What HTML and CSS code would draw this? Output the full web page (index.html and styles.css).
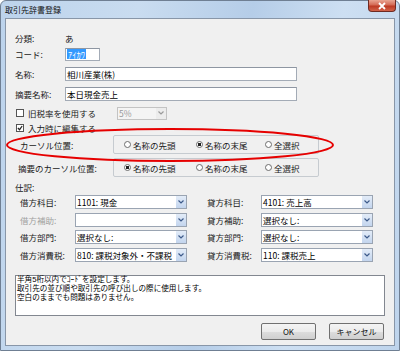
FILE: index.html
```html
<!doctype html>
<html>
    <head>
        <meta charset="utf-8" />
        <meta name="viewport" content="width=device-width, initial-scale=1" />
        <title>取引先辞書登録</title>
        <link rel="stylesheet" href="styles.css">
    </head>
    <body>
        <div class="window">
            <div class="titlebar">
                <span class="title">取引先辞書登録</span>
                <span class="close">
                    <svg width="10" height="8" viewBox="0 0 10 8">
                        <path d="M2 1 L8 7 M8 1 L2 7" stroke="#fff" stroke-width="1.8" />
                    </svg>
                </span>
            </div>
            <div class="client">
                <div class="row r1">
                    <span class="label">分類:</span>
                    <span>あ</span>
                </div>
                <div class="row r2">
                    <span class="label">コード:</span>
                    <span class="field code"><span class="sel">ｱｲｶﾜ</span></span>
                </div>
                <div class="row r3">
                    <span class="label">名称:</span>
                    <span class="field wide">相川産業(株)</span>
                </div>
                <div class="row r4">
                    <span class="label">摘要名称:</span>
                    <span class="field wide">本日現金売上</span>
                </div>
                <div class="row r5">
                    <span class="check"></span>
                    <span class="check-text">旧税率を使用する</span>
                    <span class="combo disabled small">
                        <span class="combo-text">5%</span>
                        <span class="arrow"><svg width="6" height="4" viewBox="0 0 6 4"><path d="M0.5 0.5 L3 3 L5.5 0.5" fill="none" stroke="#9a9a9a" stroke-width="1.2" /></svg></span>
                    </span>
                </div>
                <div class="row r6">
                    <span class="check checked">
                        <svg width="6" height="6" viewBox="0 0 7 7"><path d="M1 3.5 L3 5.5 L6 1.2" fill="none" stroke="#222" stroke-width="1.4" /></svg>
                    </span>
                    <span class="check-text">入力時に編集する</span>
                </div>
                <div class="row r7">
                    <span class="group-label">カーソル位置:</span>
                    <div class="group">
                        <span class="radio-item first"><span class="radio"></span>名称の先頭</span>
                        <span class="radio-item second"><span class="radio on"></span>名称の末尾</span>
                        <span class="radio-item"><span class="radio"></span>全選択</span>
                    </div>
                </div>
                <div class="row r8">
                    <span class="group-label alt">摘要のカーソル位置:</span>
                    <div class="group">
                        <span class="radio-item first"><span class="radio on"></span>名称の先頭</span>
                        <span class="radio-item second"><span class="radio"></span>名称の末尾</span>
                        <span class="radio-item"><span class="radio"></span>全選択</span>
                    </div>
                </div>
                <div class="row r9">
                    <span>仕訳:</span>
                </div>
                <div class="journal" id="journal"></div>
                <div class="memo">
                    <div>半角5桁以内でｺｰﾄﾞを設定します。</div>
                    <div>取引先の並び順や取引先の呼び出しの際に使用します。</div>
                    <div>空白のままでも問題はありません。</div>
                </div>
                <div class="buttons">
                    <span class="btn">OK</span>
                    <span class="btn">キャンセル</span>
                </div>
            </div>
            <svg class="mark" width="400" height="351" viewBox="0 0 400 351">
                <ellipse cx="170" cy="145" rx="163" ry="16" fill="none" stroke="#e60000" stroke-width="2" />
            </svg>
        </div>
        <script>
            const rows = [
                ["借方科目:", "1101: 現金", "貸方科目:", "4101: 売上高"],
                ["借方補助:", "", "貸方補助:", "選択なし:"],
                ["借方部門:", "選択なし:", "貸方部門:", "選択なし:"],
                ["借方消費税:", "810: 課税対象外・不課税", "貸方消費税:", "110: 課税売上"],
            ];
            const journal = document.getElementById("journal");
            const arrow = '<span class="arrow"><svg width="6" height="4" viewBox="0 0 6 4"><path d="M0.5 0.5 L3 3 L5.5 0.5" fill="none" stroke="#3d5a8a" stroke-width="1.2" /></svg></span>';

            rows.forEach((r, i) => {
                for (let c = 0; c < 2; c++) {
                    const label = document.createElement("span");
                    label.className = "j-label" + (c === 1 ? " right" : "") + (i === 1 && c === 0 ? " muted" : "");
                    label.textContent = r[c * 2];
                    const combo = document.createElement("span");
                    combo.className = "combo";
                    combo.innerHTML = '<span class="combo-text"></span>' + arrow;
                    combo.firstChild.textContent = r[c * 2 + 1];
                    journal.appendChild(label);
                    journal.appendChild(combo);
                }
            });
        </script>
    </body>
</html>
```

FILE: styles.css
```css
html {
    font-family: "Noto Sans CJK JP", "Noto Sans", sans-serif;
}

body {
    margin: 0;
    background: #fff;
}

.window {
    position: relative;
    width: 400px;
    height: 351px;
    box-sizing: border-box;
    border: 1px solid #6f7f93;
    border-radius: 6px 6px 0 0;
    background: linear-gradient(100deg, #bcd3ec 0%, #c9dcf0 30%, #b5cde8 55%, #cddff2 75%, #bed4ec 100%);
    display: flex;
    flex-direction: column;
}

.titlebar {
    height: 17px;
    display: flex;
    align-items: center;
    justify-content: space-between;
    padding-left: 4px;
}

.title {
    font-size: 8px;
    color: #111;
}

.close {
    align-self: flex-start;
    width: 28px;
    height: 12px;
    margin-right: 3px;
    margin-top: -1px;
    box-sizing: border-box;
    border: 1px solid #6e2a22;
    border-top: none;
    border-radius: 0 0 4px 4px;
    background: linear-gradient(#e9a592, #d46a55 45%, #bd3a24 55%, #d2634a);
    display: flex;
    align-items: center;
    justify-content: center;
}

.client {
    flex: 1;
    margin: 0 4px 4px 4px;
    border: 1px solid #8896a8;
    background: #f0f0f0;
    display: flex;
    flex-direction: column;
    padding-left: 9px;
    font-size: 8.5px;
    color: #1a1a1a;
}

.row {
    display: flex;
    align-items: center;
    height: 14px;
    flex-shrink: 0;
}

.r1 { margin-top: 12px; }
.r2 { margin-top: 2px; }
.r3 { margin-top: 6px; }
.r4 { margin-top: 6px; }
.r5 { margin-top: 5px; }
.r6 { margin-top: 1px; }
.r7 { height: 19px; }
.r8 { height: 19px; margin-top: 4px; }
.r9 { margin-top: 3px; }

.label {
    width: 50px;
}

.field {
    box-sizing: border-box;
    height: 14px;
    border: 1px solid #a3abb6;
    border-top-color: #8e96a2;
    background: #fff;
    display: flex;
    align-items: center;
    padding-left: 1px;
    color: #000;
}

.field.code {
    width: 35px;
    height: 13px;
}

.field.wide {
    width: 232px;
}

.sel {
    background: #3399ff;
    color: #fff;
    padding: 0 1px;
    line-height: 10px;
}

.check {
    box-sizing: border-box;
    width: 8px;
    height: 8px;
    margin-left: 1px;
    border: 1px solid #555;
    background: #fff;
    display: flex;
    align-items: center;
    justify-content: center;
}

.check-text {
    margin-left: 4px;
    width: 89px;
}

.combo {
    box-sizing: border-box;
    width: 112px;
    height: 14px;
    border: 1px solid #9aa4b2;
    background: #fff;
    display: flex;
    align-items: center;
    color: #000;
}

.combo-text {
    flex: 1;
    padding-left: 1px;
    white-space: nowrap;
    overflow: hidden;
}

.arrow {
    width: 10px;
    height: 12px;
    background: linear-gradient(#e3ecf8, #c3d5ee);
    display: flex;
    align-items: center;
    justify-content: center;
}

.combo.small {
    width: 50px;
    height: 13px;
    border-color: #c3c3c3;
    background: #f4f4f4;
    color: #9a9a9a;
}

.combo.disabled .arrow {
    height: 11px;
    background: #ececec;
}

.group-label {
    width: 93px;
    padding-left: 5px;
}

.group-label.alt {
    width: 95px;
    padding-left: 3px;
}

.group {
    box-sizing: border-box;
    width: 206px;
    height: 19px;
    border: 1px solid #c6cbd0;
    border-radius: 2px;
    display: flex;
    align-items: center;
    padding-left: 10px;
}

.radio-item {
    display: flex;
    align-items: center;
    white-space: nowrap;
}

.radio-item.first {
    width: 72px;
}

.radio-item.second {
    width: 69px;
}

.radio {
    box-sizing: border-box;
    width: 7px;
    height: 7px;
    border: 1px solid #6d6d6d;
    border-radius: 50%;
    background: #fff;
    margin-right: 2px;
}

.radio.on {
    background: radial-gradient(circle, #222 0 1.6px, #fff 2px);
}

.journal {
    margin-top: 1px;
    display: grid;
    grid-template-columns: 55px 112px 74px 112px;
    grid-auto-rows: 14px;
    row-gap: 3.5px;
    padding-left: 5px;
    align-items: center;
    flex-shrink: 0;
}

.j-label.right {
    margin-left: 20px;
}

.j-label.muted {
    color: #a0a0a0;
}

.memo {
    box-sizing: border-box;
    margin-top: 13.5px;
    width: 370px;
    height: 41px;
    border: 1px solid #828790;
    background: #fff;
    font-family: "Liberation Sans", "Noto Sans CJK JP", sans-serif;
    font-size: 7.6px;
    line-height: 8.8px;
    padding: 0 1px;
    color: #000;
    flex-shrink: 0;
}

.buttons {
    margin-top: 7px;
    display: flex;
    justify-content: flex-end;
    gap: 13px;
    padding-right: 10px;
}

.btn {
    box-sizing: border-box;
    width: 55px;
    height: 17px;
    border: 1px solid #707070;
    border-radius: 2px;
    background: linear-gradient(#f4f4f4, #ebebeb 50%, #dddddd 51%, #cfcfcf);
    display: flex;
    align-items: center;
    justify-content: center;
    font-size: 8px;
    color: #111;
}

.mark {
    position: absolute;
    left: -1px;
    top: -1px;
    pointer-events: none;
}
```
